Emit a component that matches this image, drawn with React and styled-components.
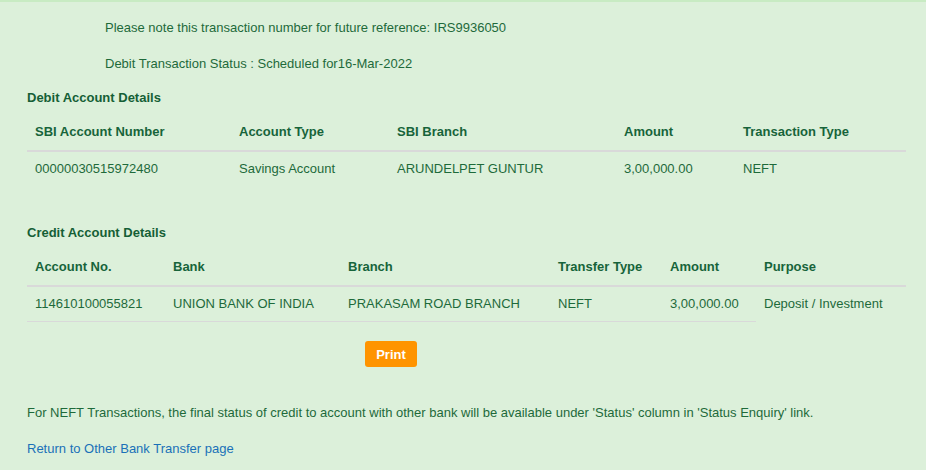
import React from "react";
import styled, { createGlobalStyle } from "styled-components";

const Global = createGlobalStyle`
  body {
    margin: 0;
    background: #dcf0da;
    font-family: "Liberation Sans", Arial, sans-serif;
  }
`;

const Page = styled.div`
  min-height: 470px;
  box-sizing: border-box;
  border-top: 2px solid #c8ebc3;
  padding: 18px 20px 0 27px;
  color: #1e6a3a;
  font-size: 13px;
  line-height: 16px;
`;

const Note = styled.p`
  margin: 0 0 ${(p) => p.$gap ?? 20}px 78px;
`;

const Heading = styled.h3`
  margin: ${(p) => p.$top || 0}px 0 8px;
  font-size: 13px;
  line-height: 16px;
  font-weight: bold;
  color: #155f36;
`;

const Table = styled.table`
  width: 879px;
  border-collapse: collapse;
  table-layout: fixed;
`;

const Th = styled.th`
  width: ${(p) => p.$w - 16}px;
  text-align: left;
  font-weight: bold;
  padding: 10px 8px;
  border-bottom: 2px solid #d9d9d9;
  color: #17643a;
`;

const Td = styled.td`
  padding: 9px 8px;
  font-weight: normal;
  white-space: nowrap;
  border-bottom: ${(p) => (p.$line ? "1px solid #d9d9d9" : "none")};
`;

const Actions = styled.div`
  padding: 19px 0 0 338px;
`;

const PrintButton = styled.button`
  height: 26px;
  width: 52px;
  padding: 0;
  border: none;
  border-radius: 3px;
  background: #ff9400;
  color: #fff;
  font-family: "Liberation Sans", Arial, sans-serif;
  font-size: 13px;
  font-weight: bold;
`;

const Footer = styled.p`
  margin: 38px 0 20px;
`;

const Link = styled.a`
  color: #1a70b8;
  text-decoration: none;
`;

const debitCols = [
  ["SBI Account Number", 204],
  ["Account Type", 158],
  ["SBI Branch", 227],
  ["Amount", 119],
  ["Transaction Type", 171],
];
const debitRow = ["00000030515972480", "Savings Account", "ARUNDELPET GUNTUR", "3,00,000.00", "NEFT"];

const creditCols = [
  ["Account No.", 138],
  ["Bank", 175],
  ["Branch", 210],
  ["Transfer Type", 112],
  ["Amount", 94],
  ["Purpose", 150],
];
const creditRow = ["114610100055821", "UNION BANK OF INDIA", "PRAKASAM ROAD BRANCH", "NEFT", "3,00,000.00", "Deposit / Investment"];

export default function App() {
  return (
    <>
      <Global />
      <Page>
        <Note>Please note this transaction number for future reference: IRS9936050</Note>
        <Note $gap={18}>Debit Transaction Status : Scheduled for16-Mar-2022</Note>

        <Heading>Debit Account Details</Heading>
        <Table>
          <thead>
            <tr>
              {debitCols.map(([t, w]) => (
                <Th key={t} $w={w}>{t}</Th>
              ))}
            </tr>
          </thead>
          <tbody>
            <tr>
              {debitRow.map((v) => (
                <Td key={v}>{v}</Td>
              ))}
            </tr>
          </tbody>
        </Table>

        <Heading $top={39}>Credit Account Details</Heading>
        <Table>
          <thead>
            <tr>
              {creditCols.map(([t, w]) => (
                <Th key={t} $w={w}>{t}</Th>
              ))}
            </tr>
          </thead>
          <tbody>
            <tr>
              {creditRow.map((v, i) => (
                <Td key={v} $line={i < creditRow.length - 1}>{v}</Td>
              ))}
            </tr>
          </tbody>
        </Table>

        <Actions>
          <PrintButton>Print</PrintButton>
        </Actions>

        <Footer>
          For NEFT Transactions, the final status of credit to account with other bank will be available under 'Status' column in 'Status Enquiry' link.
        </Footer>
        <Link href="#">Return to Other Bank Transfer page</Link>
      </Page>
    </>
  );
}
